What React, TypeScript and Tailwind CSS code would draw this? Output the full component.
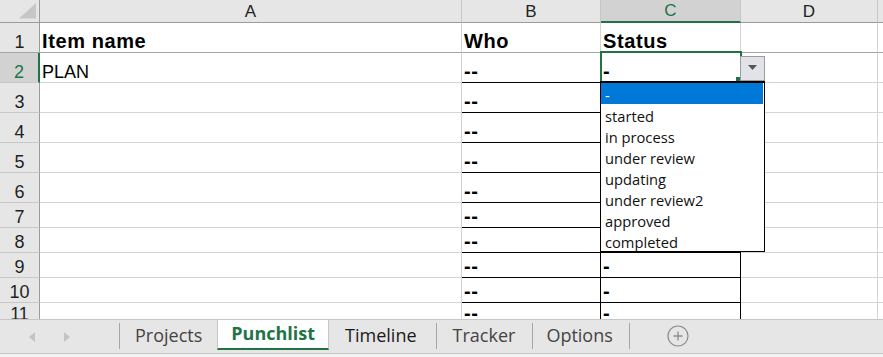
import React from 'react';

const items = ['-', 'started', 'in process', 'under review', 'updating', 'under review2', 'approved', 'completed'];

function Sep() {
  return <div className="w-px shrink-0 bg-[#a6a6a6] mt-[3px] mb-[4px]" />;
}

export default function App() {
  const rows = [1, 2, 3, 4, 5, 6, 7, 8, 9, 10, 11];
  return (
    <div className="w-[883px] h-[357px] overflow-hidden bg-white flex flex-col">
      <div className="h-[319px] shrink-0 overflow-hidden font-['Liberation_Sans',Arial,sans-serif] text-black">
        <div className="grid grid-cols-[40px_422px_139px_140px_137px_6px] grid-rows-[23px_30px_30px_30px_30px_30px_30px_25px_25px_25px_25px]">
          {/* column header row */}
          <div className="relative bg-[#e6e6e6] border-r border-b border-r-[#9b9b9b] border-b-[#9b9b9b]">
            <svg className="absolute left-[19px] top-[3px]" width="17" height="16" viewBox="0 0 17 16">
              <polygon points="0,15.5 17,15.5 17,0" fill="#c6c6c6" />
            </svg>
          </div>
          <div className="bg-[#e6e6e6] border-r border-b border-r-[#c6c6c6] border-b-[#9b9b9b] flex items-center justify-center text-[17px] leading-none text-[#222]">A</div>
          <div className="bg-[#e6e6e6] border-r border-b border-r-[#c6c6c6] border-b-[#9b9b9b] flex items-center justify-center text-[17px] leading-none text-[#222]">B</div>
          <div className="bg-[#d2d2d2] border-r border-b-2 border-r-[#c6c6c6] border-b-[#217346] flex items-center justify-center text-[17px] leading-none text-[#217346]">C</div>
          <div className="bg-[#e6e6e6] border-r border-b border-r-[#c6c6c6] border-b-[#9b9b9b] flex items-center justify-center text-[17px] leading-none text-[#222]">D</div>
          <div className="bg-[#e6e6e6] border-b border-b-[#9b9b9b]" />

          {rows.map((r) => {
            const head = r === 1;
            const sel = r === 2;
            const gridB = head ? 'border-b-[#a6a6a6]' : 'border-b-[#d4d4d4]';
            const black = r >= 2;
            return (
              <React.Fragment key={r}>
                <div
                  className={`flex items-end justify-center pb-[1px] border-b text-[18px] leading-none ${
                    sel
                      ? 'bg-[#d2d2d2] text-[#217346] border-r-2 border-r-[#217346]'
                      : 'bg-[#e6e6e6] text-[#1f1f1f] border-r border-r-[#9b9b9b]'
                  } ${head ? 'border-b-[#a6a6a6]' : 'border-b-[#c8c8c8]'}`}
                >
                  {r}
                </div>
                <div
                  className={`flex items-end pl-[2px] pb-[1px] border-r border-b border-r-[#d4d4d4] ${gridB} leading-none whitespace-nowrap ${
                    head ? 'text-[20px] font-bold tracking-[0.6px]' : 'text-[18px]'
                  }`}
                >
                  {head ? 'Item name' : sel ? 'PLAN' : ''}
                </div>
                <div
                  className={`flex items-end pl-[2px] pb-[1px] border-r border-b leading-none text-[20px] font-bold tracking-[0.6px] whitespace-nowrap ${
                    black ? 'border-r-black border-b-black' : `border-r-[#d4d4d4] ${gridB}`
                  }`}
                >
                  {head ? 'Who' : '--'}
                </div>
                <div
                  className={`relative flex items-end pl-[2px] pb-[1px] border-r border-b leading-none text-[20px] font-bold tracking-[0.6px] whitespace-nowrap ${
                    black ? 'border-r-black border-b-black' : `border-r-[#d4d4d4] ${gridB}`
                  }`}
                >
                  {head ? 'Status' : '-'}
                  {sel && (
                    <>
                      <div className="absolute left-[-1px] top-[-2px] w-[142px] h-[30px] border-2 border-b-0 border-[#217346] z-10 pointer-events-none" />
                      <div className="absolute left-[135px] top-[24px] w-[6px] h-[6px] bg-[#217346] z-10" />
                      <div className="absolute left-[139px] top-[3px] w-[25px] h-[25px] z-20 bg-[#e2e3e8] border border-[#9d9d9d] flex items-center justify-center">
                        <svg width="9" height="5" viewBox="0 0 9 5" className="mt-[-2px]">
                          <polygon points="0,0 9,0 4.5,5" fill="#555" />
                        </svg>
                      </div>
                      <div className="absolute left-[-1px] top-[28px] z-20 w-[165px] bg-white border border-t-2 border-black font-['Open_Sans',sans-serif] text-[14.7px] leading-none font-normal tracking-normal text-[#111]">
                        {items.map((it, i) => (
                          <div
                            key={i}
                            className={`h-[21px] flex items-center pl-[4px] pt-[3px] mr-[1px] ${
                              i === 0 ? 'bg-[#0078d7] text-white' : ''
                            }`}
                          >
                            {it}
                          </div>
                        ))}
                      </div>
                    </>
                  )}
                </div>
                <div className={`border-r border-b border-r-[#d4d4d4] ${gridB}`} />
                <div className={`border-b ${gridB}`} />
              </React.Fragment>
            );
          })}
        </div>
      </div>

      {/* sheet tabs */}
      <div className="h-[35px] shrink-0 flex bg-[#e6e6e6] border-y border-y-[#c6c6c6] font-['Open_Sans',sans-serif] text-[18px] leading-none">
        <div className="w-[119px] shrink-0 flex items-center pl-[29px] gap-[29px]">
          <svg width="6" height="10" viewBox="0 0 6 10">
            <polygon points="6,0 6,10 0,5" fill="#c4c4c4" />
          </svg>
          <svg width="6" height="10" viewBox="0 0 6 10">
            <polygon points="0,0 0,10 6,5" fill="#c4c4c4" />
          </svg>
        </div>
        <Sep />
        <div className="pl-[15px] pr-[15px] flex items-center pb-[4px] text-[#444]">Projects</div>
        <div className="px-[13px] flex items-center pb-[2px] mb-[3px] bg-white border-x border-x-[#c6c6c6] border-b-2 border-b-[#217346] font-bold text-[#217346]">
          Punchlist
        </div>
        <div className="pl-[16px] pr-[19px] flex items-center pb-[4px] text-[#1a1a1a]">Timeline</div>
        <Sep />
        <div className="pl-[16px] pr-[17px] flex items-center pb-[4px] text-[#444]">Tracker</div>
        <Sep />
        <div className="pl-[13px] pr-[16px] flex items-center pb-[4px] text-[#444]">Options</div>
        <Sep />
        <div className="ml-[37px] flex items-center pb-[1px]">
          <svg width="22" height="22" viewBox="0 0 22 22">
            <circle cx="11" cy="11" r="10" fill="none" stroke="#8a8a8a" strokeWidth="1.2" />
            <path d="M11 6.5 V15.5 M6.5 11 H15.5" stroke="#8a8a8a" strokeWidth="1.3" />
          </svg>
        </div>
      </div>
      <div className="h-[4px] shrink-0 bg-[#f3f3f3]" />
    </div>
  );
}
